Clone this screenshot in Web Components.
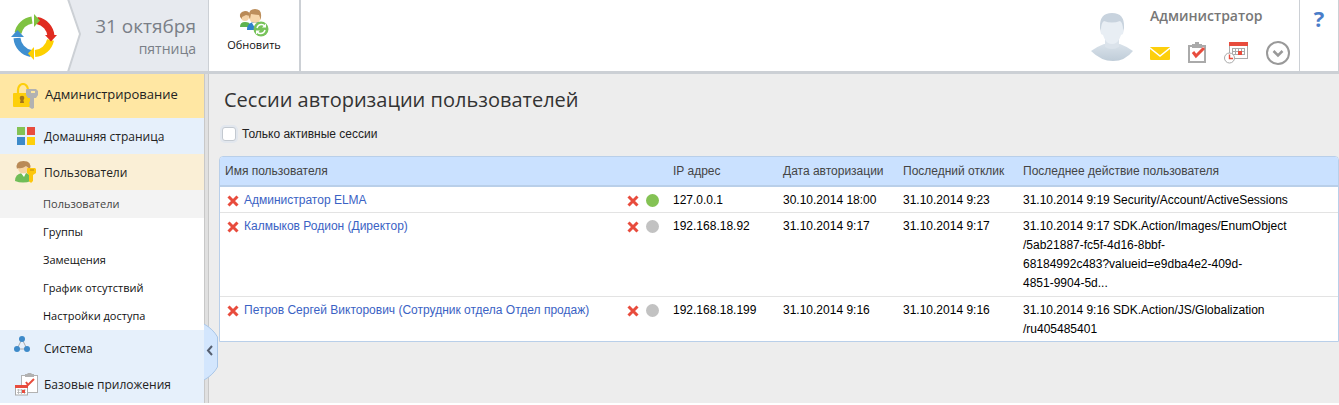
<!DOCTYPE html>
<html lang="ru">
<head>
<meta charset="utf-8">
<title>Сессии авторизации пользователей</title>
<style>
  html, body { margin: 0; height: 100%; }
  body { background: #fff; font-family: "Open Sans", sans-serif; color: #222; }
</style>
</head>
<body>
<elma-app></elma-app>

<script>
const ICONS = {
  logo: `<svg width="46" height="46" viewBox="0 0 46 46">
    <g fill="none" stroke-width="7">
      <path d="M7 19 A17 17 0 0 1 21 6" stroke="#7fc241"/>
      <path d="M26 6.500 A17 17 0 0 1 40 22" stroke="#e02b20"/>
      <path d="M39.500 26 A17 17 0 0 1 24 39.500" stroke="#fdd000"/>
      <path d="M20 39.500 A17 17 0 0 1 6 24" stroke="#3f8fd0"/>
    </g>
    <path d="M23 0 L29 6.500 23 13Z" fill="#7fc241"/>
    <path d="M34 21 H46 L40 27.500Z" fill="#e02b20"/>
    <path d="M23 33 V46 L17 39.500Z" fill="#fdd000"/>
    <path d="M0 23 H13 L6.500 16Z" fill="#3f8fd0"/></svg>`,
  refresh: `<svg width="30" height="28" viewBox="0 0 30 28">
    <path d="M1 18q0-5 5-5t5 3v2z" fill="#5fb350"/><circle cx="6" cy="8" r="4" fill="#f4d3a8"/>
    <path d="M1 8q-1-5 5-6 5 0 5 5L7 6 3 8v2z" fill="#b98a57"/>
    <path d="M8 21q0-8 8-8t8 5v3z" fill="#2f82cc"/><path d="M13 14h5l-2 5z" fill="#fff"/>
    <circle cx="16" cy="8" r="6" fill="#f7d7ab"/><path d="M10 8q-1-8 6-8 7 0 6 8v3l-2-5-8-1-1 5z" fill="#bd8f5c"/>
    <circle cx="22" cy="20" r="7.500" fill="#78c35b"/>
    <path d="M18 19q1-3.500 4.500-3.500 2 0 3 1.500M26 21q-1 3.500-4.500 3.500-2 0-3-1.500" fill="none" stroke="#fff" stroke-width="1.500"/>
    <path d="M27 14.500v4h-4zM17 25.500v-4h4z" fill="#fff"/></svg>`,
  avatar: `<svg width="44" height="52" viewBox="0 0 44 52">
    <defs><linearGradient id="g" x1="0" y1="0" x2="0" y2="1"><stop offset="0" stop-color="#d9e2ea"/><stop offset="1" stop-color="#bfccd8"/></linearGradient></defs>
    <path d="M1 41q5-4 13-7h16q8 3 13 7-8 10-20 10T1 41z" fill="url(#g)"/>
    <path d="M15 28h14v9q-7 4-14 0z" fill="#dbe3eb"/>
    <path d="M10 18Q9 3 22 3t12 15l-1 4H11z" fill="#c8d3de"/>
    <path d="M11 20q0-7 3-9 8 3 16 0 3 2 3 9 1 0 0 4l-2 1q-2 6-5 8-4 2-8 0-3-2-5-8l-2-1q-1-4 0-4z" fill="#e8eef4"/></svg>`,
  mail: `<svg width="20" height="13" viewBox="0 0 20 13"><rect width="20" height="13" rx="1" fill="#fdcf0c"/><path d="M0 1l10 8 10-8" fill="none" stroke="#fff" stroke-width="1.500"/></svg>`,
  task: `<svg width="18" height="22" viewBox="0 0 18 22"><rect x="1" y="4" width="16" height="16" fill="#fff" stroke="#aaa" stroke-width="2"/><rect x="4" y="2" width="10" height="4" fill="#aaa"/><rect x="7" y="0" width="4" height="3" fill="#aaa"/><path d="M5 10l3 4 8-8" fill="none" stroke="#e84c3d" stroke-width="3"/></svg>`,
  calendar: `<svg width="24" height="22" viewBox="0 0 24 22"><rect x="5.500" y="1" width="18" height="15.500" fill="#fff" stroke="#aaa"/><rect x="5" width="19" height="4" fill="#e84c3d"/><path d="M8 6.500h13M8 9.500h13M8 12.500h13M8.500 6v7M11.500 6v7M14.500 6v7M17.500 6v7M20.500 6v7" stroke="#aaa"/><rect x="14" y="9" width="4" height="4" fill="#e84c3d"/><circle cx="5.500" cy="16" r="5" fill="#fff" stroke="#aaa"/><path d="M5.500 12.500V16.500H9" fill="none" stroke="#e84c3d" stroke-width="1.400"/></svg>`,
  more: `<svg width="24" height="24" viewBox="0 0 24 24"><circle cx="12" cy="12" r="11" fill="#fff" stroke="#999" stroke-width="2"/><path d="M7.500 10l4.500 4.500 4.500-4.500" fill="none" stroke="#999" stroke-width="2.500"/></svg>`,
  lock: `<svg width="26" height="26" viewBox="0 0 26 26"><path d="M5 11V7a5 6 0 0 1 10 0v4" fill="none" stroke="#fdcf0c" stroke-width="2.200"/><rect y="10" width="18" height="14" rx="1" fill="#fdcf0c"/><circle cx="9" cy="15" r="2.300" fill="#a3761a"/><path d="M8 15h2l1 5H7z" fill="#a3761a"/><path d="M13 7q0-1 1-1h9l2 2v4l-2 3h-2v10l-2 1-3-2 1-2-1-2 1-2v-3h-2l-2-3z" fill="#b2b2b2"/><rect x="18" y="8" width="4" height="2" fill="#fde7a0"/></svg>`,
  home: `<svg width="18" height="18" viewBox="0 0 18 18"><path d="M0 0h8v8H0z" fill="#84c254"/><path d="M10 0h8v8h-8z" fill="#e84c3d"/><path d="M0 10h8v8H0z" fill="#3d8ac9"/><path d="M10 10h8v8h-8z" fill="#fdcf0c"/></svg>`,
  user: `<svg width="22" height="22" viewBox="0 0 22 22"><path d="M0 20q0-7 7-8h4q5 1 5 8-8 3-16 0z" fill="#70bd58"/><path d="M6 12h5l-2 4z" fill="#fff"/><circle cx="8.500" cy="7" r="5.500" fill="#f5d3a3"/><path d="M2 8Q0 0 8.500 0T15 8l-4-3q-4 3-8 2z" fill="#b98a57"/><path d="M12 8q0-1 1-1h7l1 1v4l-3 2v6l-2 2-2-2v-6l-2-2z" fill="#fdc70c"/><path d="M15 9h4" stroke="#b98a17"/></svg>`,
  system: `<svg width="24" height="24" viewBox="0 0 24 24"><path d="M8 3L3 13h10z" fill="none" stroke="#aaa"/><g fill="#3d8ac9"><circle cx="8" cy="3" r="3"/><circle cx="3" cy="13" r="3"/><circle cx="13" cy="13" r="3"/></g></svg>`,
  apps: `<svg width="23" height="23" viewBox="0 0 23 23"><rect x="6.500" y="2.500" width="16" height="17" fill="#fff" stroke="#b2b2b2"/><path d="M10 1h2l1-1h3l1 1h2v3h-9z" fill="#b2b2b2"/><path d="M11 9l2 3 6-6" fill="none" stroke="#e84c3d" stroke-width="2"/><rect x=".5" y="12.500" width="12" height="9.500" fill="#fff" stroke="#aaa"/><path d="M0 12h13v3H0z" fill="#e84c3d"/><path d="M2 17h9M2 19.500h9M3.500 16v5M6.500 16v5M9.500 16v5" stroke="#aaa" stroke-width=".7"/><path d="M7 17h3v3H7z" fill="#e84c3d"/></svg>`,
  cross: `<svg width="12" height="12" viewBox="0 0 12 12"><path d="M1.500 1.500l9 9M10.500 1.500l-9 9" stroke="#e84c3d" stroke-width="3"/></svg>`,
  on: `<svg width="13" height="13" viewBox="0 0 13 13"><circle cx="6.500" cy="6.500" r="6.500" fill="#84c254"/></svg>`,
  off: `<svg width="13" height="13" viewBox="0 0 13 13"><circle cx="6.500" cy="6.500" r="6.500" fill="#c2c2c2"/></svg>`
};

const BASE = `*{box-sizing:border-box} button{display:flex;border:0;padding:0;margin:0;background:none;font:inherit;color:inherit;cursor:pointer} a{color:inherit;text-decoration:none} svg{display:block}`;

function define(name, css, markup) {
  customElements.define(name, class extends HTMLElement {
    constructor() {
      super();
      const root = this.attachShadow({ mode: "open" });
      root.innerHTML = `<style>${BASE}${css}</style>${markup}`;
    }
  });
}

customElements.define("elma-icon", class extends HTMLElement {
  constructor() { super(); this.attachShadow({ mode: "open" }); }
  connectedCallback() {
    this.shadowRoot.innerHTML = `<style>:host{display:inline-flex;flex:none} svg{display:block}</style>${ICONS[this.getAttribute("name")]}`;
  }
});

define("elma-date", `
  :host{display:flex;flex:none;width:209px;background:#e7eaef;border-right:1px solid #ccd0d5}
  .logo{display:grid;grid-template-columns:80px}
  .logo > *{grid-area:1/1}
  .logo elma-icon{padding:14px 0 0 11px}
  .text{flex:1;text-align:right;padding:13px 12px 0 0;color:#7a7f87;white-space:nowrap}
  .day{font-size:19px;line-height:26px}
  .week{font-size:14px;line-height:20px}
`, `<div class="logo"><svg width="82" height="71" viewBox="0 0 82 71"><path d="M0 0H68L80 34 68 71H0z" fill="#fff"/><path d="M68-1L80 34 68 72" fill="none" stroke="#ccd0d5" stroke-width="2"/></svg><elma-icon name="logo"></elma-icon></div>
<div class="text"><div class="day">31 октября</div><div class="week">пятница</div></div>`);

define("elma-header", `
  :host{display:flex;height:74px;background:#fff;border-bottom:3px solid #ccd0d5}
  .refresh{flex:none;width:92px;border-right:2px solid #ccd0d5;flex-direction:column;align-items:center;padding:9px 0 0;font-size:11px;line-height:16px;color:#111}
  .user{margin-left:auto;display:flex;gap:16px;padding-top:6px;padding-right:9px}
  .avatar{padding-top:4px}
  .name{font-weight:600;font-size:14px;line-height:20px;color:#777}
  .tools{display:flex;align-items:center;gap:18px;height:24px;margin-top:15px}
  .help{flex:none;width:40px;border-left:1px solid #ccd0d5;border-right:1px solid #ccd0d5;justify-content:center;padding-top:6px;font-weight:700;font-size:22px;line-height:24px;color:#4a7dc9}
`, `<elma-date></elma-date>
<button class="refresh"><elma-icon name="refresh"></elma-icon><span>Обновить</span></button>
<div class="user"><elma-icon class="avatar" name="avatar"></elma-icon>
<div><div class="name">Администратор</div><div class="tools">
<button aria-label="Сообщения"><elma-icon name="mail"></elma-icon></button>
<button aria-label="Задачи"><elma-icon name="task"></elma-icon></button>
<button aria-label="Календарь"><elma-icon name="calendar"></elma-icon></button>
<button aria-label="Ещё"><elma-icon name="more"></elma-icon></button></div></div></div>
<button class="help">?</button>`);

define("elma-nav-item", `
  :host{display:block;background:#e6f0fb;font-size:12px}
  :host([main]){background:#ffe7a3;font-size:13px}
  :host([open]){background:#faefd6}
  a{display:flex;align-items:center;height:36px;color:#222}
  :host([main]) a{height:44px}
  :host([main]) .label{padding:0 0 4px 1px}
  .icon{flex:none;width:44px;display:flex;justify-content:center;padding-left:8px}
`, `<a href="#"><span class="icon"><slot name="icon"></slot></span><span class="label"><slot></slot></span></a>`);

define("elma-nav-sub", `
  :host{display:block;background:#fff;font-size:11px}
  :host([active]){background:#f3f3f3}
  a{display:flex;align-items:center;height:28px;padding:0 0 2px 43px;color:#111}
  :host([active]) a{color:#444}
`, `<a href="#"><slot></slot></a>`);

define("elma-sidebar", `
  :host{display:block;position:relative;flex:none;width:209px;border-right:1px solid #c8c8c8;background:#e0e0e0}
  nav{width:205px;height:100%;background:#e6f0fb;border-right:1px solid #c8c8c8}
  .toggle{position:absolute;left:204px;top:250px;z-index:1}
`, `<nav>
<elma-nav-item main><elma-icon slot="icon" name="lock"></elma-icon>Администрирование</elma-nav-item>
<elma-nav-item><elma-icon slot="icon" name="home"></elma-icon>Домашняя страница</elma-nav-item>
<elma-nav-item open><elma-icon slot="icon" name="user"></elma-icon>Пользователи</elma-nav-item>
<elma-nav-sub active>Пользователи</elma-nav-sub>
<elma-nav-sub>Группы</elma-nav-sub>
<elma-nav-sub>Замещения</elma-nav-sub>
<elma-nav-sub>График отсутствий</elma-nav-sub>
<elma-nav-sub>Настройки доступа</elma-nav-sub>
<elma-nav-item><elma-icon slot="icon" name="system"></elma-icon>Система</elma-nav-item>
<elma-nav-item><elma-icon slot="icon" name="apps"></elma-icon>Базовые приложения</elma-nav-item>
</nav>
<button class="toggle" aria-label="Свернуть меню"><svg width="14" height="56" viewBox="0 0 14 56"><path d="M0 0Q9 5 13.500 13V43Q9 51 0 56z" fill="#d3e6fd"/><path d="M0 0Q9 5 13.500 13V43Q9 51 0 56" fill="none" stroke="#a9c6e8"/><path d="M8 22L4 26.500 8 31" fill="none" stroke="#555f70" stroke-width="2"/></svg></button>`);

define("elma-checkbox", `
  :host{display:block;font:12px/16px "Liberation Sans",Arial,sans-serif;color:#222}
  label{display:flex;align-items:center;gap:6px}
  input{appearance:none;width:14px;height:14px;margin:0;background:#fff;border:1px solid #c3c9d0;border-radius:3px;box-shadow:0 0 0 2px #e2e7ee}
`, `<label><input type="checkbox"><slot></slot></label>`);

const SESSIONS = [
  ["Администратор ELMA", "on", "127.0.0.1", "30.10.2014 18:00", "31.10.2014 9:23", "31.10.2014 9:19 Security/Account/ActiveSessions"],
  ["Калмыков Родион (Директор)", "off", "192.168.18.92", "31.10.2014 9:17", "31.10.2014 9:17", "31.10.2014 9:17 SDK.Action/Images/EnumObject<br>/5ab21887-fc5f-4d16-8bbf-<br>68184992c483?valueid=e9dba4e2-409d-<br>4851-9904-5d..."],
  ["Петров Сергей Викторович (Сотрудник отдела Отдел продаж)", "off", "192.168.18.199", "31.10.2014 9:16", "31.10.2014 9:16", "31.10.2014 9:16 SDK.Action/JS/Globalization<br>/ru405485401"]
];

define("elma-sessions", `
  :host{display:block;border:1px solid #b9cfe9;border-radius:4px 4px 0 0;overflow:hidden;background:#fff;font:12px/19px "Liberation Sans",Arial,sans-serif;color:#000}
  table{width:100%;border-collapse:separate;border-spacing:0;table-layout:fixed}
  th{height:30px;padding:0 5px;background:#cae1ff;border-bottom:2px solid #b9cfe9;text-align:left;font-weight:400;color:#444;white-space:nowrap}
  td{padding:4px 5px 2px;vertical-align:top;border-bottom:1px solid #e3e3e3}
  tbody tr:nth-child(2) td{padding-bottom:3px}
  tr:last-child td{border-bottom:0}
  .who{display:flex;gap:5px;align-items:center;height:19px;padding-left:2px;white-space:nowrap}
  .who a{color:#3a62c4}
  .who .end{margin-left:auto;display:flex;align-items:center;gap:7px;padding-right:4px}
`, `<table><colgroup><col><col style="width:110px"><col style="width:120px"><col style="width:120px"><col style="width:320px"></colgroup>
<thead><tr><th>Имя пользователя</th><th>IP адрес</th><th>Дата авторизации</th><th>Последний отклик</th><th>Последнее действие пользователя</th></tr></thead>
<tbody>${SESSIONS.map(([n, s, ip, d1, d2, act]) => `<tr><td><div class="who"><button aria-label="Завершить сессии"><elma-icon name="cross"></elma-icon></button><a href="#">${n}</a><span class="end"><button aria-label="Завершить сессию"><elma-icon name="cross"></elma-icon></button><elma-icon name="${s}"></elma-icon></span></div></td><td>${ip}</td><td>${d1}</td><td>${d2}</td><td>${act}</td></tr>`).join("")}</tbody></table>`);

define("elma-app", `
  :host{display:flex;flex-direction:column;min-height:calc(100% - 2px);background:#ededed}
  .body{display:flex;flex:1}
  main{flex:1;min-width:0;padding:12px 0 0 10px}
  h1{margin:0;padding-left:5px;font-weight:400;font-size:20px;line-height:28px;color:#333}
  elma-checkbox{margin:12px 0 14px 3px}
`, `<elma-header></elma-header><div class="body"><elma-sidebar></elma-sidebar>
<main><h1>Сессии авторизации пользователей</h1><elma-checkbox>Только активные сессии</elma-checkbox><elma-sessions></elma-sessions></main></div>`);
</script>
</body>
</html>
